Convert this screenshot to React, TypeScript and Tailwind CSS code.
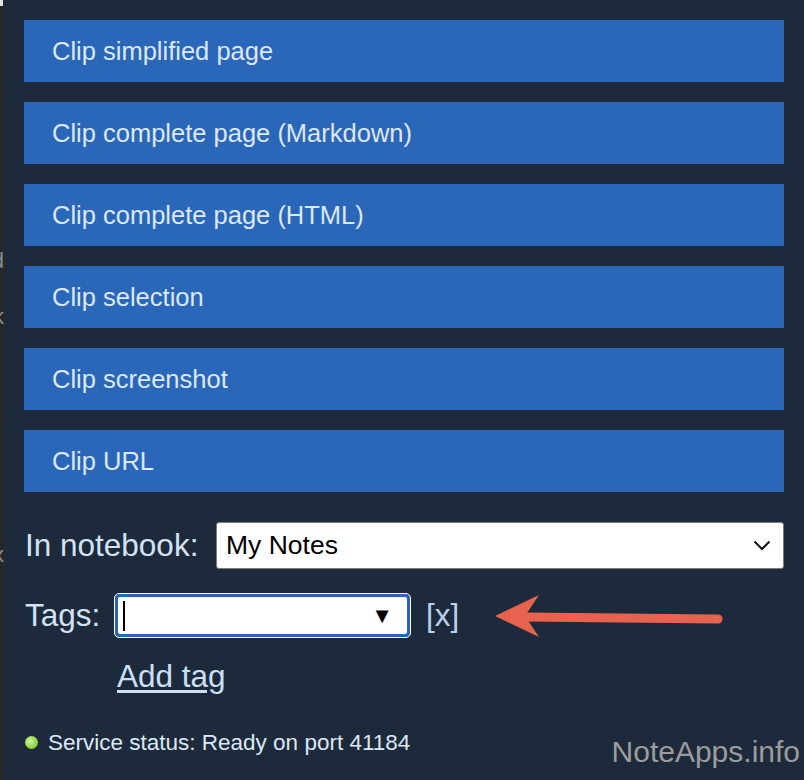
import React from 'react';

const CLIP_ACTIONS = [
  'Clip simplified page',
  'Clip complete page (Markdown)',
  'Clip complete page (HTML)',
  'Clip selection',
  'Clip screenshot',
  'Clip URL',
];

export default function App() {
  return (
    <div className="relative flex h-[780px] w-[804px] overflow-hidden font-['Liberation_Sans',Arial,sans-serif]">
      {/* Sliver of the page behind the popup */}
      <div className="w-[4px] shrink-0 bg-[#262729] relative overflow-hidden">
        <div className="h-[6px] w-[3px] bg-[#e5e5e5]" />
        <span className="absolute top-[250px] right-0 text-[22px] leading-none text-[#8a8a8a]">d</span>
        <span className="absolute top-[306px] right-0 text-[22px] leading-none text-[#8a8a8a]">k</span>
        <span className="absolute top-[544px] right-0 text-[22px] leading-none text-[#8a8a8a]">x</span>
      </div>

      {/* Popup panel */}
      <div className="flex-1 bg-[#1c2a3b] pl-[20px] pr-[20px] pt-[20px]">
        {/* Clip buttons */}
        <div className="flex flex-col gap-[20px]">
          {CLIP_ACTIONS.map((label) => (
            <button
              key={label}
              className="flex h-[62px] w-full items-center bg-[#2a67b8] pl-[28px] text-left text-[25.5px] text-[#dce8f7]"
            >
              {label}
            </button>
          ))}
        </div>

        {/* Notebook */}
        <div className="mt-[30px] flex items-center">
          <span className="w-[192px] shrink-0 pl-[1px] text-[31.5px] text-[#d3e2f5]">In notebook:</span>
          <div className="flex h-[47px] flex-1 items-center justify-between rounded-[3px] border border-[#7a7a7a] bg-white pl-[9px] pr-[12px]">
            <span className="text-[26.5px] text-black">My Notes</span>
            <svg width="18" height="11" viewBox="0 0 18 11" fill="none">
              <path d="M1.5 1.5 L9 9 L16.5 1.5" stroke="#111" strokeWidth="2" />
            </svg>
          </div>
        </div>

        {/* Tags */}
        <div className="mt-[23px] flex items-center">
          <span className="w-[90px] shrink-0 pl-[1px] text-[31.5px] text-[#d3e2f5]">Tags:</span>
          <div className="flex h-[45px] w-[297px] items-center justify-between rounded-[5px] border border-white bg-[#2e63b1] p-[3px]">
            <div className="flex h-full w-full items-center justify-between rounded-[2px] bg-white pl-[5px] pr-[14px]">
              <div className="h-[30px] w-[2px] bg-black" />
              <span className="text-[22px] leading-none text-black">▼</span>
            </div>
          </div>
          <span className="ml-[15px] text-[31.5px] text-[#b9cfeb]">[x]</span>
          <svg className="ml-[36px]" width="230" height="46" viewBox="0 0 230 46" fill="none">
            <line x1="30" y1="24" x2="223" y2="26" stroke="#e8634f" strokeWidth="9" strokeLinecap="round" />
            <path d="M0 23 L44 2 L30 23 L44 44 Z" fill="#e8634f" />
          </svg>
        </div>

        {/* Add tag */}
        <div className="mt-[13px] pl-[93px]">
          <a href="#" className="text-[31.5px] text-[#cde0f6] underline underline-offset-[3px]">
            Add tag
          </a>
        </div>

        {/* Status */}
        <div className="mt-[26px] flex items-center gap-[10px] pl-[1px]">
          <span className="h-[13px] w-[13px] rounded-full bg-[radial-gradient(circle_at_40%_40%,#d2f59a,#8fd63f_60%,#6fb52a)]" />
          <span className="text-[22.5px] text-[#dde8f6]">Service status: Ready on port 41184</span>
        </div>
      </div>

      {/* Watermark */}
      <span className="absolute bottom-[6px] right-[4px] text-[30px] font-light text-[#9c9c9c]">NoteApps.info</span>
    </div>
  );
}
